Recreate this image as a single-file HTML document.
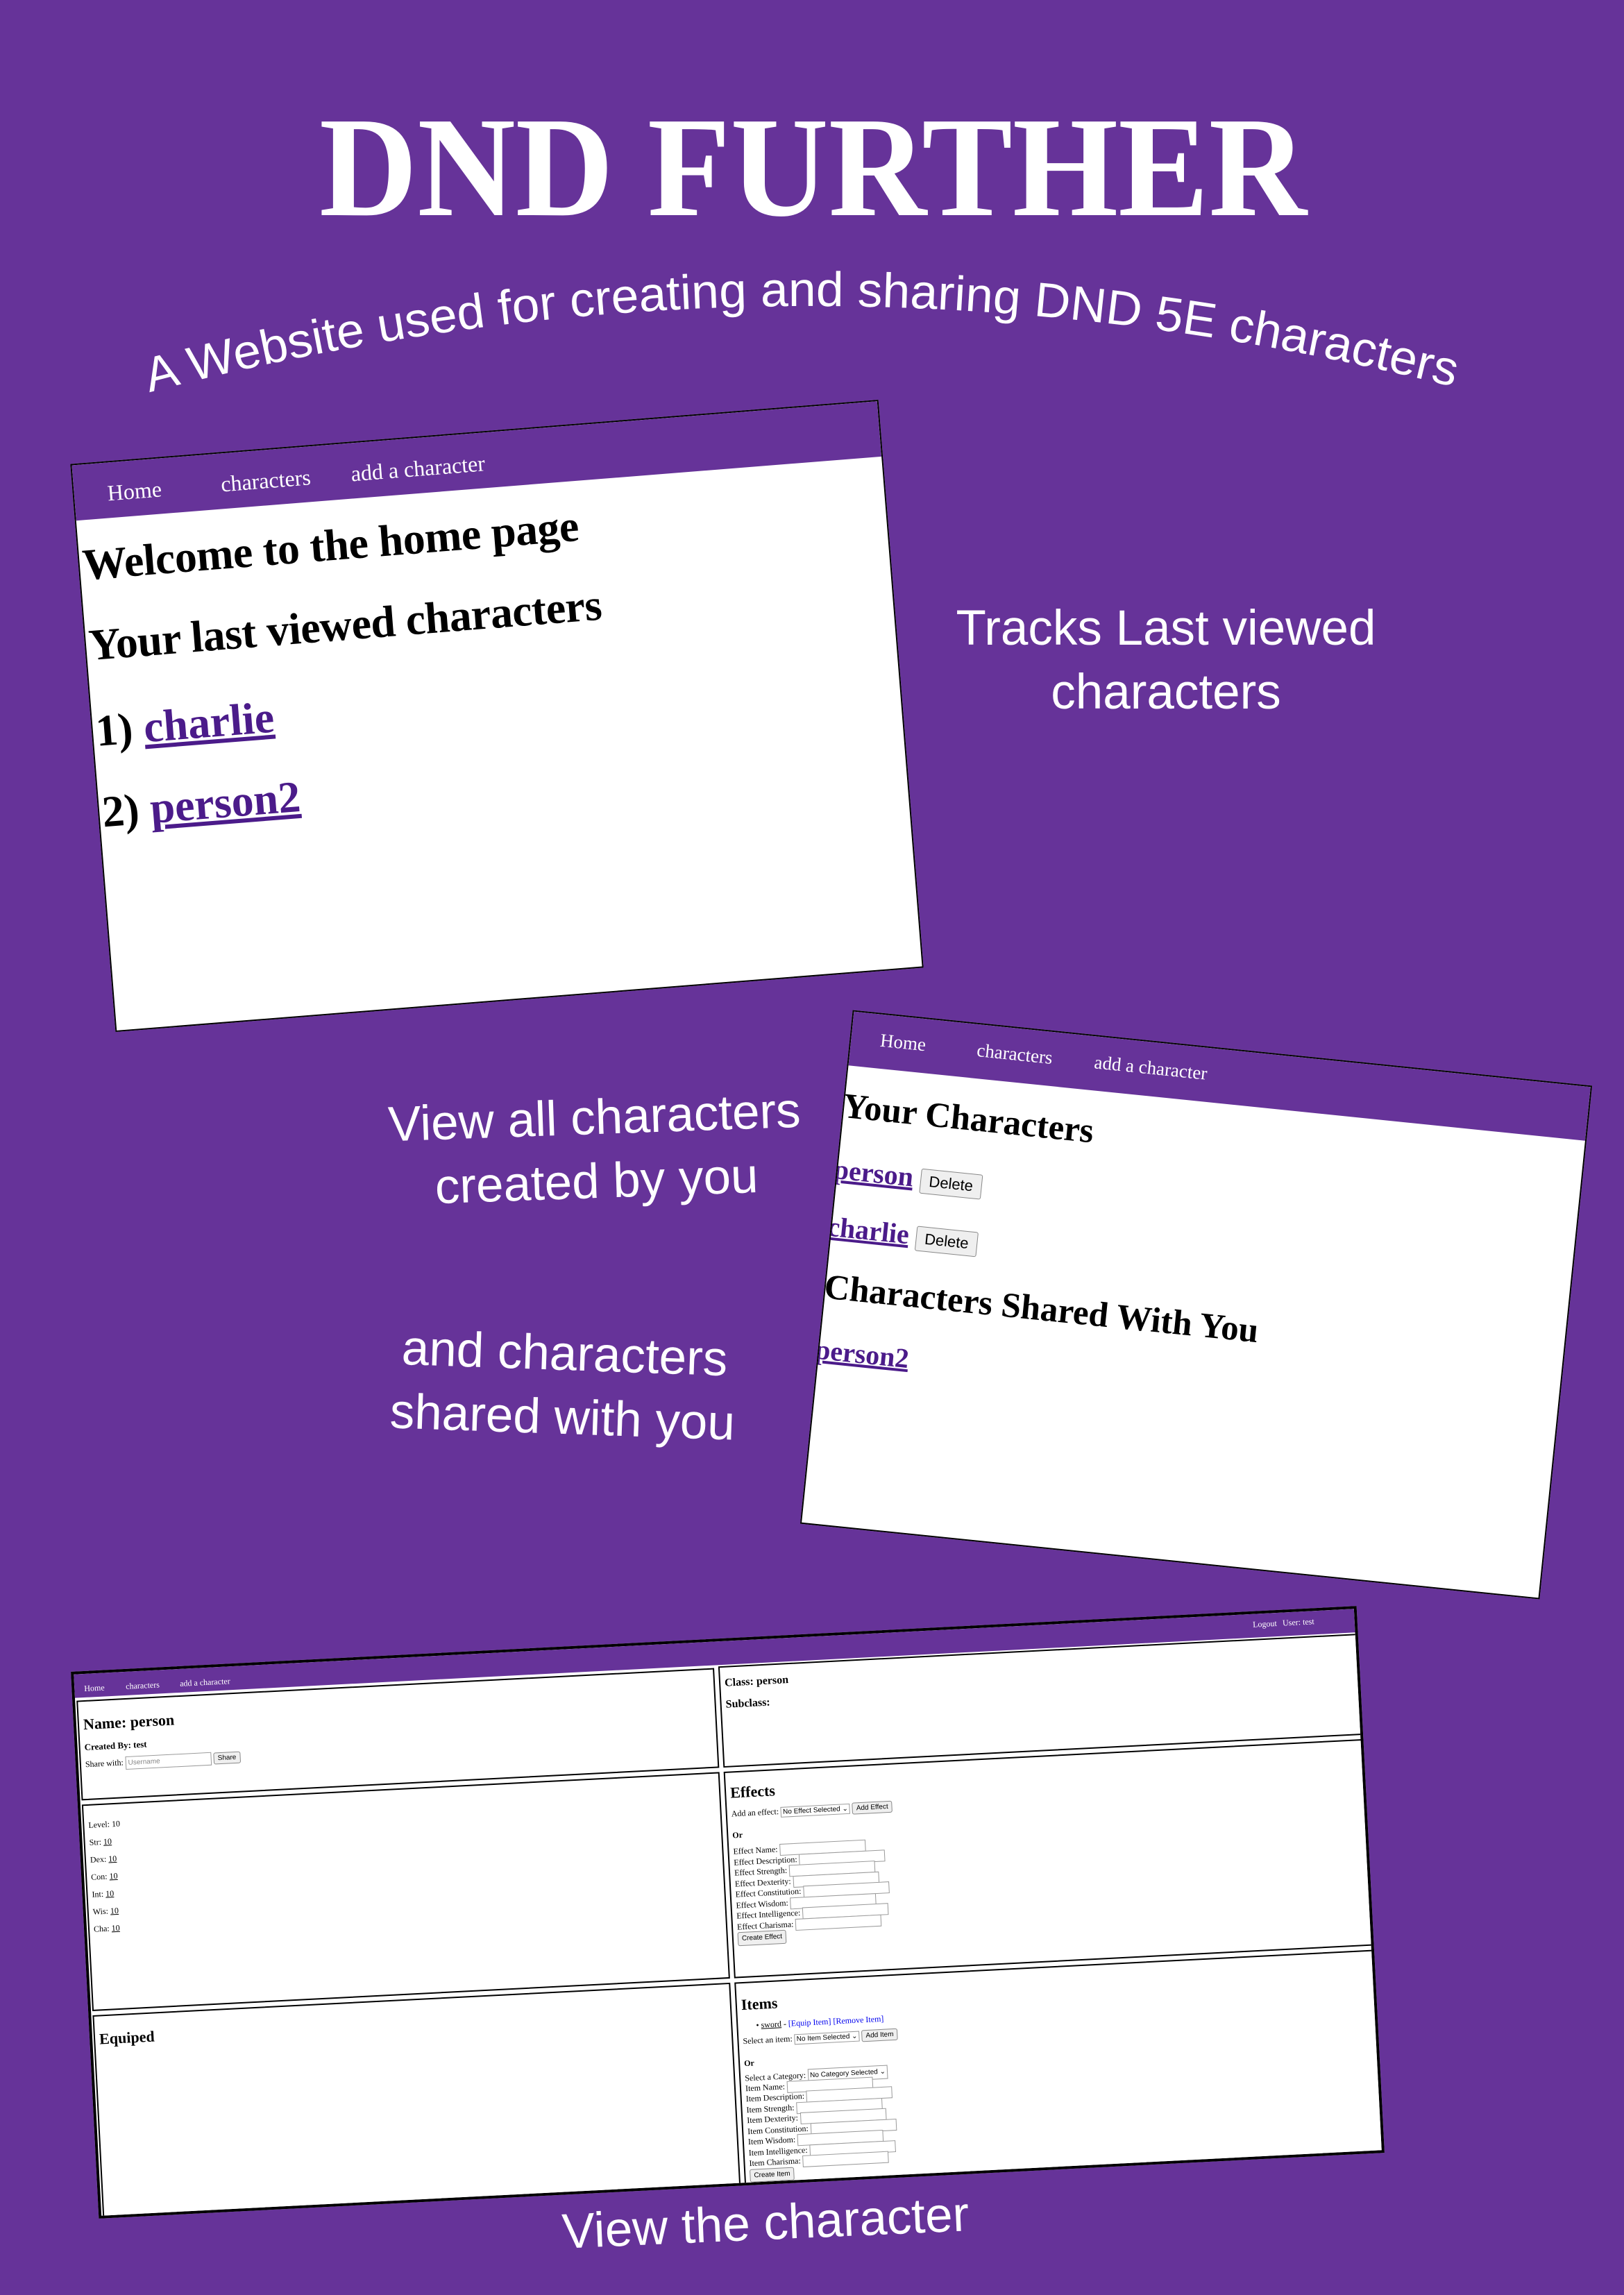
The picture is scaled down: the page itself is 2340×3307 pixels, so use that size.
<!DOCTYPE html>
<html><head><meta charset="utf-8">
<style>
html,body{margin:0;padding:0}
body{width:2340px;height:3307px;background:#663399;position:relative;overflow:hidden;font-family:"Liberation Serif",serif}
.abs{position:absolute}
.cap{position:absolute;color:#fff;font-family:"Liberation Sans",sans-serif;font-size:71px;text-align:center;line-height:92px;white-space:nowrap}
.panel{position:absolute;background:#fff;border:2px solid #000;overflow:hidden;box-sizing:border-box}
.nav{background:#663399;color:#fff;position:absolute;left:0;top:0;right:0}
.nav span{position:absolute;white-space:nowrap}
.p a{color:#4b1b8a;text-decoration:underline}
.t{position:absolute;white-space:nowrap}
.btn{display:inline-block;border:1px solid #888;border-radius:3px;background:#efefef;font-family:"Liberation Sans",sans-serif;color:#000}
.cell{position:absolute;border:2px solid #000;box-sizing:border-box;background:#fff}
.sm{font-size:12px}
.inp{display:inline-block;border:1px solid #999;height:15px;vertical-align:middle;background:#fff}
.sel{display:inline-block;border:1px solid #999;font-family:"Liberation Sans",sans-serif;font-size:10px;padding:1px 2px;vertical-align:middle}
.row{height:15.5px;line-height:15.5px}
</style></head><body>

<svg class="abs" style="left:0;top:0" width="2340" height="700">
  <text x="460" y="310" textLength="1423" lengthAdjust="spacingAndGlyphs" fill="#fff" font-family="Liberation Serif, serif" font-weight="bold" font-size="206">DND FURTHER</text>
  <path id="arc" d="M 205 568 Q 1150 318 2105 560" fill="none"/>
  <text fill="#fff" font-family="Liberation Sans, sans-serif" font-size="70"><textPath href="#arc" startOffset="50%" text-anchor="middle" textLength="1900" lengthAdjust="spacingAndGlyphs">A Website used for creating and sharing DND 5E characters</textPath></text>
</svg>

<!-- Panel 1 -->
<div class="panel p" style="left:132px;top:621px;width:1168px;height:821px;transform:rotate(-4.55deg)">
  <div class="nav" style="height:80px;font-size:32px">
    <span style="left:48px;top:26px">Home</span>
    <span style="left:212px;top:26px">characters</span>
    <span style="left:400px;top:26px">add a character</span>
  </div>
  <div class="t" style="left:4px;top:108px;font-size:64px;font-weight:bold;letter-spacing:-0.5px">Welcome to the home page</div>
  <div class="t" style="left:4px;top:224px;font-size:64px;font-weight:bold;letter-spacing:-0.5px">Your last viewed characters</div>
  <div class="t" style="left:4px;top:348px;font-size:64px;font-weight:bold">1) <a>charlie</a></div>
  <div class="t" style="left:4px;top:465px;font-size:64px;font-weight:bold">2) <a>person2</a></div>
</div>

<!-- Panel 2 -->
<div class="panel p" style="left:1188px;top:1508px;width:1071px;height:744px;transform:rotate(5.84deg)">
  <div class="nav" style="height:78px;font-size:27px">
    <span style="left:42px;top:22px">Home</span>
    <span style="left:182px;top:22px">characters</span>
    <span style="left:352px;top:22px">add a character</span>
  </div>
  <div class="t" style="left:-2px;top:108px;font-size:51px;font-weight:bold">Your Characters</div>
  <div class="t" style="left:-6px;top:205px;font-size:40px;font-weight:bold"><a>person</a> <span class="btn" style="font-size:22px;font-weight:normal;padding:4px 12px;vertical-align:middle">Delete</span></div>
  <div class="t" style="left:-6px;top:288px;font-size:40px;font-weight:bold"><a>charlie</a> <span class="btn" style="font-size:22px;font-weight:normal;padding:4px 12px;vertical-align:middle">Delete</span></div>
  <div class="t" style="left:-2px;top:370px;font-size:51px;font-weight:bold">Characters Shared With You</div>
  <div class="t" style="left:-6px;top:466px;font-size:40px;font-weight:bold"><a>person2</a></div>
</div>

<!-- Panel 3 -->
<div class="panel" style="left:121px;top:2361px;width:1855px;height:789px;transform:rotate(-2.93deg);border:4px solid #000">
  <div class="nav" style="height:34px;font-size:12px">
    <span style="left:14px;top:14px">Home</span>
    <span style="left:74px;top:14px">characters</span>
    <span style="left:152px;top:14px">add a character</span>
    <span style="right:112px;top:8px">Logout</span>
    <span style="right:58px;top:8px">User: test</span>
  </div>
  <div class="cell" style="left:2px;top:38px;width:920px;height:144px">
    <div class="t" style="left:6px;top:20px;font-size:22px;font-weight:bold">Name: person</div>
    <div class="t" style="left:6px;top:58px;font-size:13px;font-weight:bold">Created By: test</div>
    <div class="t" style="left:6px;top:82px;font-size:12px">Share with: <span class="inp" style="width:122px;height:17px;font-family:'Liberation Sans';font-size:10px;color:#888;line-height:17px">&nbsp;Username</span> <span class="btn" style="font-size:10px;padding:2px 5px">Share</span></div>
  </div>
  <div class="cell" style="left:2px;top:188px;width:920px;height:298px">
    <div class="t sm" style="left:6px;top:16px;line-height:25px">Level: 10<br>Str: <u>10</u><br>Dex: <u>10</u><br>Con: <u>10</u><br>Int: <u>10</u><br>Wis: <u>10</u><br>Cha: <u>10</u></div>
  </div>
  <div class="cell" style="left:2px;top:492px;width:920px;height:300px">
    <div class="t" style="left:6px;top:20px;font-size:22px;font-weight:bold">Equiped</div>
  </div>
  <div class="cell" style="left:928px;top:36px;width:925px;height:146px">
    <div class="t" style="left:6px;top:14px;font-size:16px;font-weight:bold">Class: person</div>
    <div class="t" style="left:6px;top:45px;font-size:16px;font-weight:bold">Subclass:</div>
  </div>
  <div class="cell" style="left:928px;top:188px;width:925px;height:298px">
    <div class="t" style="left:6px;top:16px;font-size:22px;font-weight:bold">Effects</div>
    <div class="t sm" style="left:6px;top:52px">Add an effect: <span class="sel">No Effect Selected ⌄</span> <span class="btn" style="font-size:10px;padding:2px 5px">Add Effect</span></div>
    <div class="t sm" style="left:6px;top:83px;font-weight:bold">Or</div>
    <div class="t sm" style="left:6px;top:106px">
      <div class="row">Effect Name: <span class="inp" style="width:122px"></span></div>
      <div class="row">Effect Description: <span class="inp" style="width:122px"></span></div>
      <div class="row">Effect Strength: <span class="inp" style="width:122px"></span></div>
      <div class="row">Effect Dexterity: <span class="inp" style="width:122px"></span></div>
      <div class="row">Effect Constitution: <span class="inp" style="width:122px"></span></div>
      <div class="row">Effect Wisdom: <span class="inp" style="width:122px"></span></div>
      <div class="row">Effect Intelligence: <span class="inp" style="width:122px"></span></div>
      <div class="row">Effect Charisma: <span class="inp" style="width:122px"></span></div>
      <div class="row"><span class="btn" style="font-size:10px;padding:1px 5px">Create Effect</span></div>
    </div>
  </div>
  <div class="cell" style="left:928px;top:492px;width:925px;height:300px">
    <div class="t" style="left:6px;top:18px;font-size:22px;font-weight:bold">Items</div>
    <div class="t sm" style="left:26px;top:54px">• <u>sword</u> - <a style="color:#00e">[Equip Item]</a> <a style="color:#00e">[Remove Item]</a></div>
    <div class="t sm" style="left:6px;top:76px">Select an item: <span class="sel">No Item Selected ⌄</span> <span class="btn" style="font-size:10px;padding:2px 5px">Add Item</span></div>
    <div class="t sm" style="left:6px;top:108px;font-weight:bold">Or</div>
    <div class="t sm" style="left:6px;top:128px">
      <div class="row">Select a Category: <span class="sel">No Category Selected ⌄</span></div>
      <div class="row">Item Name: <span class="inp" style="width:122px"></span></div>
      <div class="row">Item Description: <span class="inp" style="width:122px"></span></div>
      <div class="row">Item Strength: <span class="inp" style="width:122px"></span></div>
      <div class="row">Item Dexterity: <span class="inp" style="width:122px"></span></div>
      <div class="row">Item Constitution: <span class="inp" style="width:122px"></span></div>
      <div class="row">Item Wisdom: <span class="inp" style="width:122px"></span></div>
      <div class="row">Item Intelligence: <span class="inp" style="width:122px"></span></div>
      <div class="row">Item Charisma: <span class="inp" style="width:122px"></span></div>
      <div class="row"><span class="btn" style="font-size:10px;padding:1px 5px">Create Item</span></div>
    </div>
  </div>
</div>

<div class="cap" style="left:1360px;top:860px;width:640px">Tracks Last viewed<br>characters</div>
<div class="cap" style="left:528px;top:1565px;width:660px;transform:rotate(-2deg)">View all characters<br>created by you</div>
<div class="cap" style="left:482px;top:1905px;width:660px;transform:rotate(2deg)">and characters<br>shared with you</div>
<div class="cap" style="left:773px;top:3158px;width:660px;transform:rotate(-2.5deg)">View the character</div>

</body></html>
